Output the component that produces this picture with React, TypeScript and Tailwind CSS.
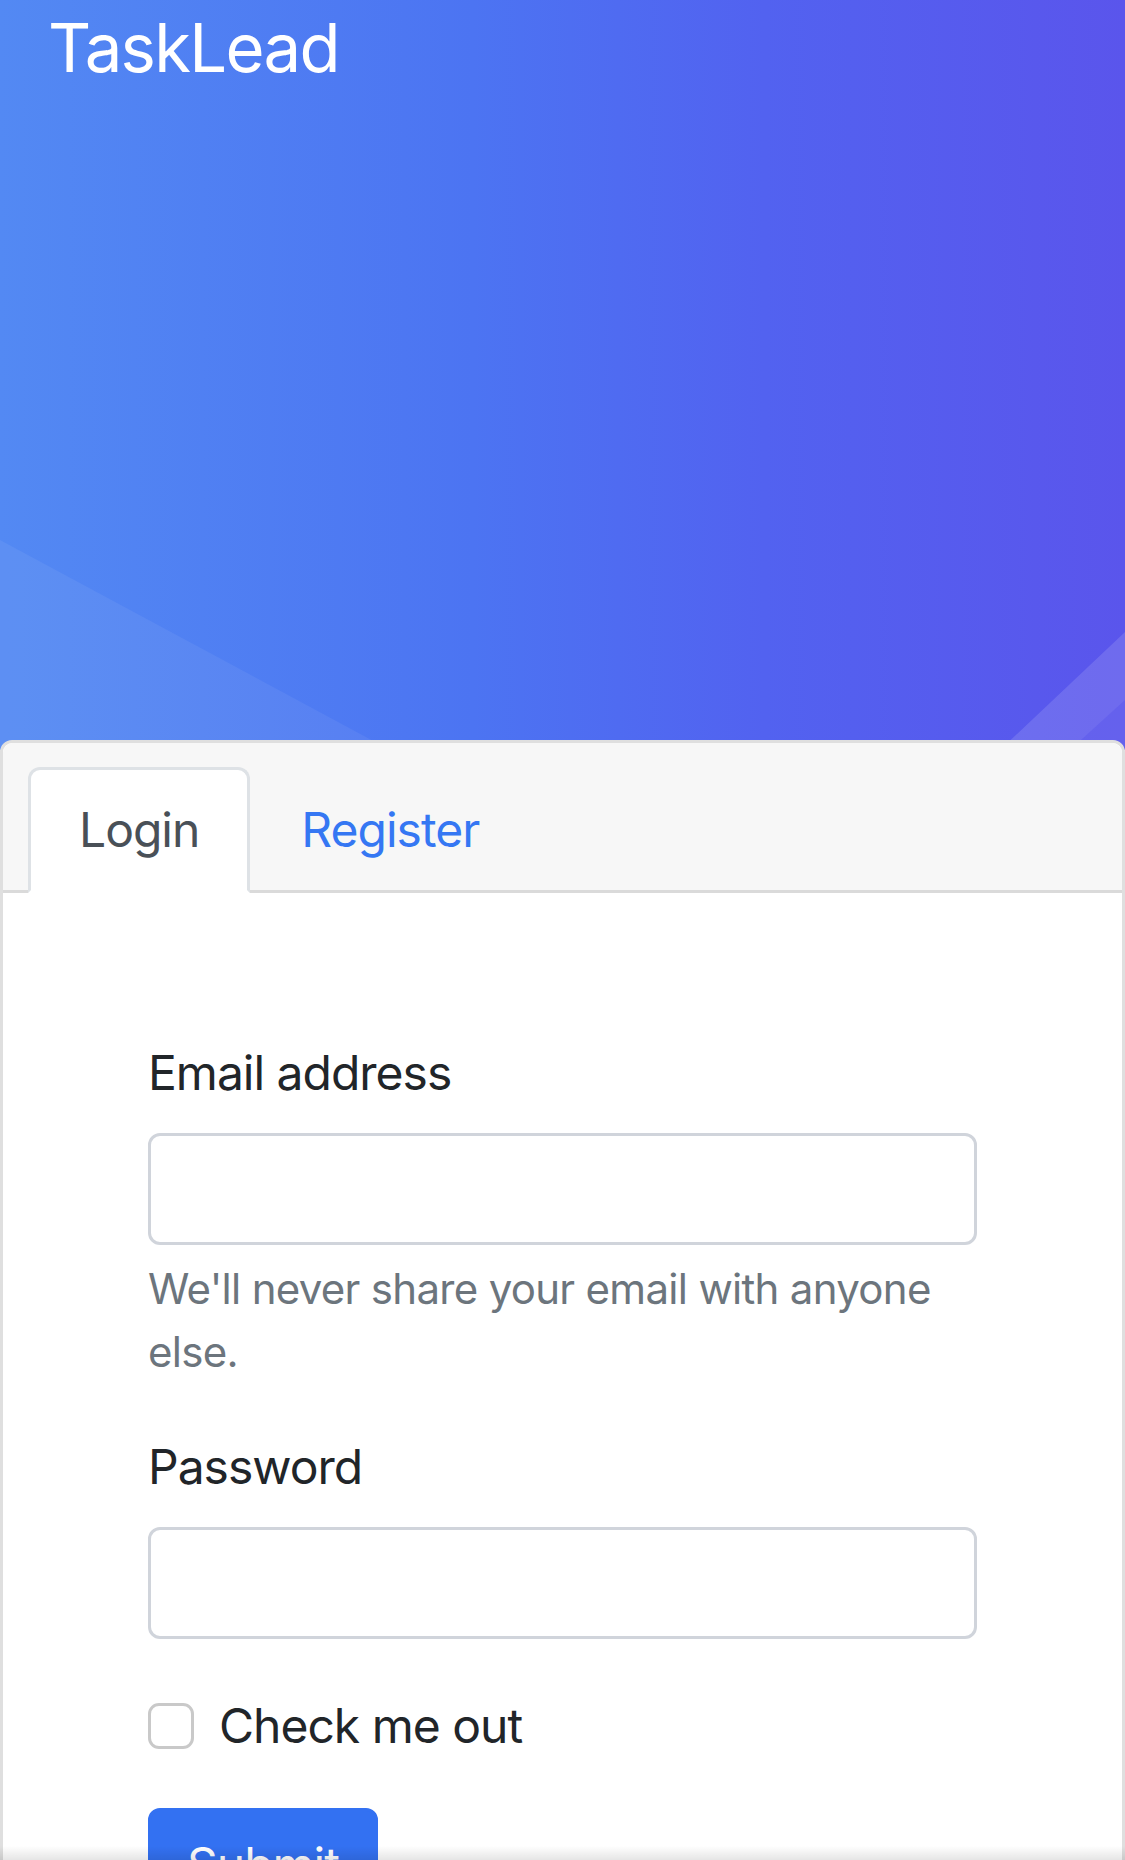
import React from "react";

export default function App() {
  return (
    <div
      className="relative h-[1860px] w-full overflow-hidden bg-white"
      style={{ fontFamily: "Inter, 'Noto Sans', 'Liberation Sans', sans-serif" }}
    >
      {/* Hero */}
      <div className="relative h-[750px] w-full bg-[linear-gradient(90deg,#5389f3_0%,#4c74f2_42%,#5262f0_68%,#5a55ec_100%)]">
        <svg
          className="absolute inset-0 h-full w-full"
          viewBox="0 0 1125 750"
          preserveAspectRatio="none"
          aria-hidden="true"
        >
          <polygon points="0,540 390,750 0,750" fill="#ffffff" fillOpacity="0.06" />
          <polygon points="1000,750 1125,632 1125,700 1070,750" fill="#ffffff" fillOpacity="0.13" />
          <polygon points="1070,750 1125,700 1125,750" fill="#ffffff" fillOpacity="0.07" />
        </svg>
        <div className="relative pl-[48px] pt-[8px] text-[67px] leading-[80px] font-normal text-white tracking-[-1.7px]">
          TaskLead
        </div>
      </div>

      {/* Card */}
      <div className="relative -mt-[10px] rounded-[12px] border-[3px] border-[#dfdfdf] bg-white">
        <div className="flex rounded-t-[10px] border-b-[3px] border-[#dadada] bg-[#f7f7f7] pl-[25px] pt-[24px]">
          <div className="-mb-[3px] rounded-t-[12px] border-[3px] border-[#dee2e6] border-b-white bg-white px-[48px] py-[24px] text-[48px] leading-[72px] tracking-[-1px] text-[#495057]">
            Login
          </div>
          <div className="-mb-[3px] border-[3px] border-transparent px-[48px] py-[24px] text-[48px] leading-[72px] tracking-[-1px] text-[#3577f3]">
            Register
          </div>
        </div>

        <div className="px-[145px] pt-[144px] pb-[200px] tracking-[-1px]">
          <label className="block text-[48px] leading-[72px] text-[#212529]">Email address</label>
          <div className="mt-[24px] h-[112px] w-full rounded-[12px] border-[3px] border-[#d0d4db] bg-white" />
          <p className="mt-[12px] text-[42px] leading-[63px] tracking-[-0.7px] text-[#6c757d]">
            We'll never share your email with anyone else.
          </p>

          <label className="mt-[48px] block text-[48px] leading-[72px] text-[#212529]">Password</label>
          <div className="mt-[24px] h-[112px] w-full rounded-[12px] border-[3px] border-[#d0d4db] bg-white" />

          <div className="mt-[51px] flex items-center gap-[25px]">
            <div className="h-[46px] w-[46px] rounded-[11px] border-[3px] border-[#c9c9c9] bg-white" />
            <span className="text-[48px] leading-[72px] text-[#212529]">Check me out</span>
          </div>

          <button className="mt-[46px] rounded-[12px] border-[3px] border-[#3371f2] bg-[#3371f2] px-[36px] py-[18px] text-[48px] leading-[72px] text-white">
            Submit
          </button>
        </div>
      </div>

      {/* bottom toolbar shadow */}
      <div className="pointer-events-none absolute bottom-0 left-0 h-[14px] w-full bg-[linear-gradient(180deg,rgba(0,0,0,0)_0%,rgba(0,0,0,0.1)_100%)]" />
    </div>
  );
}
